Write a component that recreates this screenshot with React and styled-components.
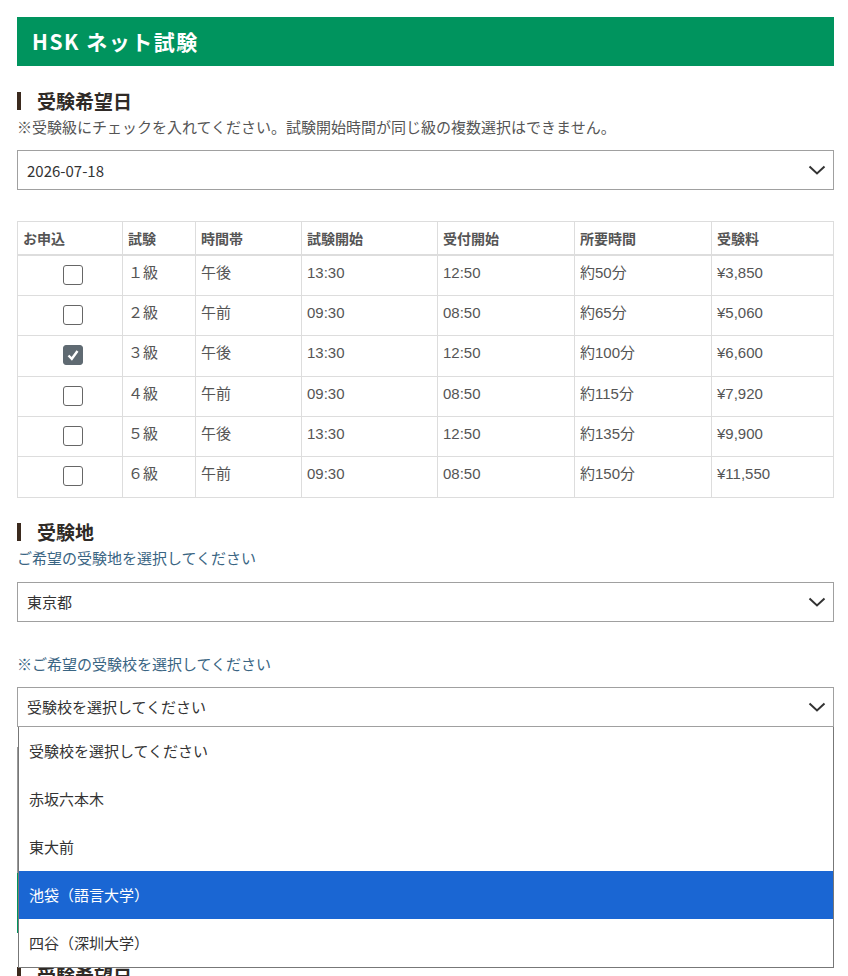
import React from "react";
import styled, { createGlobalStyle } from "styled-components";

const GlobalStyle = createGlobalStyle`
  body {
    margin: 0;
    background: #fff;
    font-family: "Noto Sans CJK JP", "Noto Sans", sans-serif;
    color: #444;
  }
`;

const rows = [
  { level: "１級", band: "午後", start: "13:30", desk: "12:50", time: "約50分", fee: "¥3,850", checked: false },
  { level: "２級", band: "午前", start: "09:30", desk: "08:50", time: "約65分", fee: "¥5,060", checked: false },
  { level: "３級", band: "午後", start: "13:30", desk: "12:50", time: "約100分", fee: "¥6,600", checked: true },
  { level: "４級", band: "午前", start: "09:30", desk: "08:50", time: "約115分", fee: "¥7,920", checked: false },
  { level: "５級", band: "午後", start: "13:30", desk: "12:50", time: "約135分", fee: "¥9,900", checked: false },
  { level: "６級", band: "午前", start: "09:30", desk: "08:50", time: "約150分", fee: "¥11,550", checked: false },
];

const schools = ["受験校を選択してください", "赤坂六本木", "東大前", "池袋（語言大学）", "四谷（深圳大学）"];

const Chevron = () => (
  <svg width="18" height="10" viewBox="0 0 18 10" fill="none">
    <path d="M1.5 1.5 L9 8.5 L16.5 1.5" stroke="#333" strokeWidth="2" />
  </svg>
);

const CheckMark = () => (
  <svg width="14" height="14" viewBox="0 0 14 14" fill="none">
    <path d="M2.5 7.5 L5.8 10.8 L11.5 3" stroke="#fff" strokeWidth="2.4" />
  </svg>
);

const App = () => {
  return (
    <Page>
      <GlobalStyle />
      <TitleBar>HSK ネット試験</TitleBar>

      <SectionTitle>受験希望日</SectionTitle>
      <Note $top={1}>※受験級にチェックを入れてください。試験開始時間が同じ級の複数選択はできません。</Note>
      <SelectBox $top={11}>
        <span>2026-07-18</span>
        <Chevron />
      </SelectBox>

      <Table>
        <colgroup>
          <col style={{ width: 105 }} />
          <col style={{ width: 73 }} />
          <col style={{ width: 106 }} />
          <col style={{ width: 136 }} />
          <col style={{ width: 137 }} />
          <col style={{ width: 137 }} />
          <col />
        </colgroup>
        <thead>
          <tr>
            <Th>お申込</Th>
            <Th>試験</Th>
            <Th>時間帯</Th>
            <Th>試験開始</Th>
            <Th>受付開始</Th>
            <Th>所要時間</Th>
            <Th>受験料</Th>
          </tr>
        </thead>
        <tbody>
          {rows.map((r) => (
            <tr key={r.level}>
              <CheckCell>
                <Box $checked={r.checked}>{r.checked && <CheckMark />}</Box>
              </CheckCell>
              <Td>{r.level}</Td>
              <Td>{r.band}</Td>
              <Td>{r.start}</Td>
              <Td>{r.desk}</Td>
              <Td>{r.time}</Td>
              <Td>{r.fee}</Td>
            </tr>
          ))}
        </tbody>
      </Table>

      <SectionTitle $top={21}>受験地</SectionTitle>
      <Note $blue $top={1}>ご希望の受験地を選択してください</Note>
      <SelectBox $top={12}>
        <span>東京都</span>
        <Chevron />
      </SelectBox>

      <Note $blue $top={30}>※ご希望の受験校を選択してください</Note>
      <SelectWrap>
        <SelectBox $top={10}>
          <span>受験校を選択してください</span>
          <Chevron />
        </SelectBox>
        <Dropdown>
          {schools.map((s, i) => (
            <Option key={s} $active={i === 3}>{s}</Option>
          ))}
        </Dropdown>
        <Panel />
        <GreenButton>確認</GreenButton>
        <SectionTitle $top={30}>受験希望日</SectionTitle>
      </SelectWrap>
    </Page>
  );
};

const Page = styled.div`
  padding: 17px 14px 0 17px;
  height: 976px;
  box-sizing: border-box;
  overflow: hidden;
`;

const TitleBar = styled.div`
  height: 49px;
  background: #00945e;
  color: #fff;
  font: 700 21px/49px "Noto Sans CJK JP", sans-serif;
  padding-left: 15px;
  letter-spacing: 1.5px;
`;

const SectionTitle = styled.h2`
  margin: ${(p) => p.$top || 22}px 0 0;
  height: 26px;
  display: flex;
  align-items: center;
  gap: 16px;
  font: 700 19px/26px "Noto Sans CJK JP", sans-serif;
  color: #2f2a26;
  &::before {
    content: "";
    width: 4px;
    height: 18px;
    background: #3b2a1e;
  }
`;

const Note = styled.p`
  margin: ${(p) => p.$top || 0}px 0 0;
  font: 400 15px/24px "Noto Sans CJK JP", sans-serif;
  color: ${(p) => (p.$blue ? "#3a6583" : "#555")};
`;

const SelectBox = styled.div`
  margin-top: ${(p) => p.$top}px;
  height: 38px;
  border: 1px solid #a0a0a0;
  display: flex;
  align-items: center;
  justify-content: space-between;
  padding: 0 7px 0 9px;
  font: 400 15px "Noto Sans CJK JP", sans-serif;
  color: #333;
  background: #fff;
`;

const Table = styled.table`
  margin-top: 31px;
  width: 100%;
  table-layout: fixed;
  border-collapse: collapse;
  font-family: "Liberation Sans", "Noto Sans CJK JP", sans-serif;
  font-size: 15px;
  color: #555;
`;

const Th = styled.th`
  height: 32px;
  border: 1px solid #ddd;
  border-bottom: 2px solid #ddd;
  text-align: left;
  padding: 0 5px;
  font: 700 14px "Noto Sans CJK JP", sans-serif;
  color: #555;
`;

const Td = styled.td`
  height: 40.4px;
  border: 1px solid #ddd;
  padding: 8px 5px 0;
  vertical-align: top;
  box-sizing: border-box;
  line-height: 18px;
`;

const CheckCell = styled(Td)`
  text-align: center;
  padding: 9px 5px 0 10px;
`;

const Box = styled.span`
  display: inline-flex;
  align-items: center;
  justify-content: center;
  width: 20px;
  height: 20px;
  box-sizing: border-box;
  border-radius: 3px;
  border: 1px solid ${(p) => (p.$checked ? "#5f6a72" : "#666")};
  background: ${(p) => (p.$checked ? "#5f6a72" : "#fff")};
`;

const SelectWrap = styled.div`
  position: relative;
  padding-top: 1px;
`;

const Dropdown = styled.div`
  position: absolute;
  top: 51px;
  left: 1px;
  right: 0;
  z-index: 2;
  background: #fff;
  border: 1px solid #777;
  border-top: none;
`;

const Option = styled.div`
  height: 48px;
  display: flex;
  align-items: center;
  padding-left: 10px;
  font: 400 15px "Noto Sans CJK JP", sans-serif;
  background: ${(p) => (p.$active ? "#1a66d3" : "#fff")};
  color: ${(p) => (p.$active ? "#fff" : "#333")};
`;

const Panel = styled.div`
  margin-top: 20px;
  height: 124px;
  border: 1px solid #999;
`;

const GreenButton = styled.div`
  height: 60px;
  background: #00945e;
  color: #fff;
  font: 700 16px/60px "Noto Sans CJK JP", sans-serif;
  text-align: center;
`;

export default App;
